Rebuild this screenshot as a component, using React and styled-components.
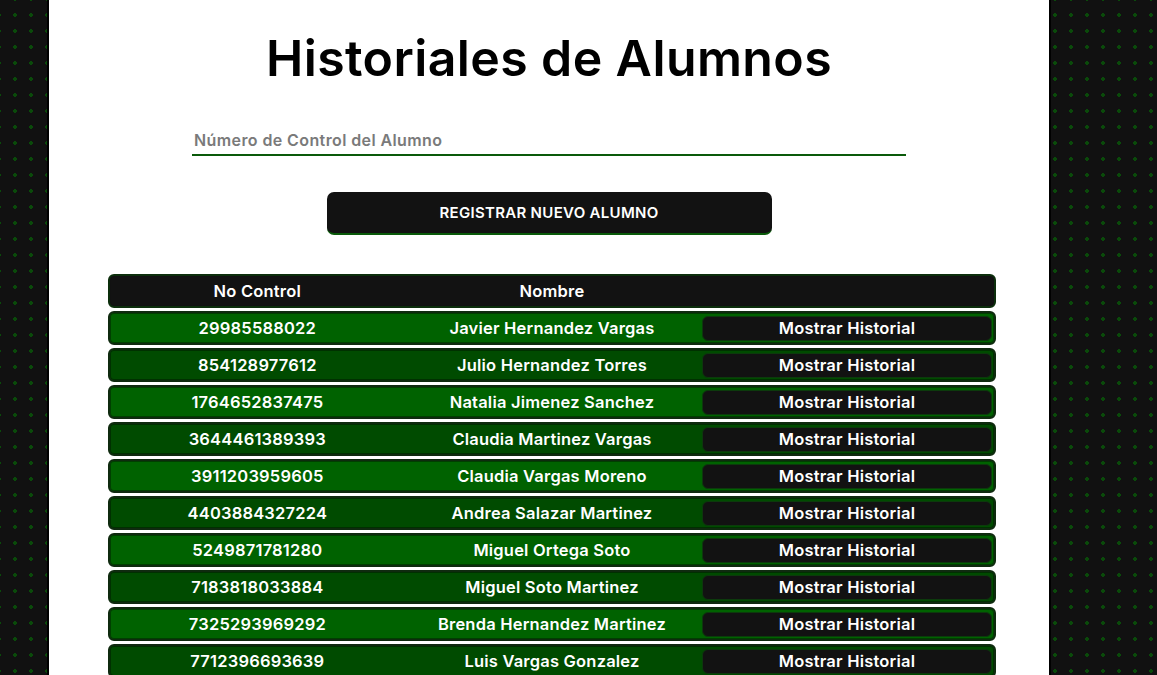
import React from "react";
import styled, { createGlobalStyle } from "styled-components";

const GlobalStyle = createGlobalStyle`
  html, body {
    margin: 0;
    padding: 0;
    height: 100%;
    overflow: hidden;
  }
  body {
    background-color: #111111;
    background-image: radial-gradient(circle, #0a4a0a 1.7px, transparent 1.9px);
    background-size: 16px 16px;
    background-position: 7px 7px;
    font-family: "Inter", "Noto Sans", sans-serif;
  }
`;

const Page = styled.div`
  display: flex;
  min-height: 100vh;
  padding-left: 47px;
`;

const Card = styled.main`
  width: 1000px;
  min-height: 100vh;
  background: #ffffff;
  border-left: 2px solid #000;
  border-right: 2px solid #000;
  display: flex;
  flex-direction: column;
  align-items: center;
  padding-top: 26px;
`;

const Title = styled.h1`
  margin: 0;
  font-size: 50px;
  font-weight: 600;
  letter-spacing: 0.4px;
  color: #000;
  line-height: 64px;
`;

const SearchInput = styled.input`
  margin-top: 36px;
  width: 714px;
  box-sizing: border-box;
  border: none;
  border-bottom: 2px solid #0a5a0a;
  outline: none;
  padding: 4px 2px 4px;
  font-family: inherit;
  font-size: 16px;
  font-weight: 600;
  letter-spacing: 0.4px;
  color: #222;
  background: transparent;

  &::placeholder {
    color: #7a7a7a;
  }
`;

const RegisterButton = styled.button`
  margin-top: 36px;
  width: 445px;
  height: 43px;
  padding-bottom: 2px;
  border: none;
  border-bottom: 2px solid #0a5a0a;
  border-radius: 7px;
  background: #121212;
  color: #fff;
  font-family: inherit;
  font-size: 15px;
  font-weight: 600;
  letter-spacing: 0.3px;
  text-transform: uppercase;
  cursor: pointer;
`;

const Table = styled.div`
  margin-top: 39px;
  margin-left: 6px;
  width: 888px;
  display: flex;
  flex-direction: column;
  gap: 3px;
`;

const Row = styled.div`
  display: grid;
  grid-template-columns: repeat(3, 1fr);
  align-items: center;
  height: 34px;
  box-sizing: border-box;
  border-radius: 6px;
  border: 2px solid ${(p) => (p.$head ? "#0c2e0c" : "#0f2a0f")};
  box-shadow: inset 0 0 0 1px ${(p) => (p.$head ? "#111" : "rgba(0,0,0,0.35)")};
  background: ${(p) => (p.$head ? "#121212" : p.$odd ? "#006200" : "#004b00")};
  color: #fff;
  font-size: 16.5px;
  font-weight: 600;
  letter-spacing: 0.2px;
`;

const Cell = styled.div`
  text-align: center;
  white-space: nowrap;
`;

const HistoryButton = styled.button`
  justify-self: end;
  margin-right: 2px;
  width: 290px;
  height: 25px;
  border: 1px solid #0c3a0c;
  border-radius: 6px;
  background: #121212;
  color: #fff;
  font-family: inherit;
  font-size: 16.5px;
  font-weight: 600;
  letter-spacing: 0.2px;
  cursor: pointer;
`;

const alumnos = [
  ["29985588022", "Javier Hernandez Vargas"],
  ["854128977612", "Julio Hernandez Torres"],
  ["1764652837475", "Natalia Jimenez Sanchez"],
  ["3644461389393", "Claudia Martinez Vargas"],
  ["3911203959605", "Claudia Vargas Moreno"],
  ["4403884327224", "Andrea Salazar Martinez"],
  ["5249871781280", "Miguel Ortega Soto"],
  ["7183818033884", "Miguel Soto Martinez"],
  ["7325293969292", "Brenda Hernandez Martinez"],
  ["7712396693639", "Luis Vargas Gonzalez"],
];

export default function App() {
  return (
    <>
      <GlobalStyle />
      <Page>
        <Card>
          <Title>Historiales de Alumnos</Title>
          <SearchInput placeholder="Número de Control del Alumno" />
          <RegisterButton>Registrar nuevo alumno</RegisterButton>
          <Table>
            <Row $head>
              <Cell>No Control</Cell>
              <Cell>Nombre</Cell>
              <Cell />
            </Row>
            {alumnos.map(([control, nombre], i) => (
              <Row key={control} $odd={i % 2 === 0}>
                <Cell>{control}</Cell>
                <Cell>{nombre}</Cell>
                <HistoryButton>Mostrar Historial</HistoryButton>
              </Row>
            ))}
          </Table>
        </Card>
      </Page>
    </>
  );
}
